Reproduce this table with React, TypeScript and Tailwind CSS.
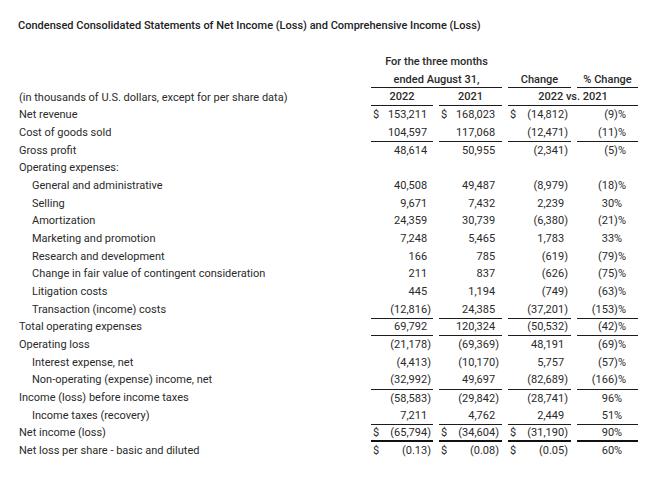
import React from "react";

type Cell = { d?: boolean; v: string };
type Row = {
  label: string;
  indent?: boolean;
  a: Cell;
  b: Cell;
  c: Cell;
  p: string;
  top?: boolean;
  bottom?: boolean;
  thick?: boolean;
};

const rows: Row[] = [
  { label: "Net revenue", a: { d: true, v: "153,211" }, b: { d: true, v: "168,023" }, c: { d: true, v: "(14,812)" }, p: "(9)%" },
  { label: "Cost of goods sold", a: { v: "104,597" }, b: { v: "117,068" }, c: { v: "(12,471)" }, p: "(11)%" },
  { label: "Gross profit", a: { v: "48,614" }, b: { v: "50,955" }, c: { v: "(2,341)" }, p: "(5)%", top: true },
  { label: "Operating expenses:", a: { v: "" }, b: { v: "" }, c: { v: "" }, p: "" },
  { label: "General and administrative", indent: true, a: { v: "40,508" }, b: { v: "49,487" }, c: { v: "(8,979)" }, p: "(18)%" },
  { label: "Selling", indent: true, a: { v: "9,671" }, b: { v: "7,432" }, c: { v: "2,239" }, p: "30%" },
  { label: "Amortization", indent: true, a: { v: "24,359" }, b: { v: "30,739" }, c: { v: "(6,380)" }, p: "(21)%" },
  { label: "Marketing and promotion", indent: true, a: { v: "7,248" }, b: { v: "5,465" }, c: { v: "1,783" }, p: "33%" },
  { label: "Research and development", indent: true, a: { v: "166" }, b: { v: "785" }, c: { v: "(619)" }, p: "(79)%" },
  { label: "Change in fair value of contingent consideration", indent: true, a: { v: "211" }, b: { v: "837" }, c: { v: "(626)" }, p: "(75)%" },
  { label: "Litigation costs", indent: true, a: { v: "445" }, b: { v: "1,194" }, c: { v: "(749)" }, p: "(63)%" },
  { label: "Transaction (income) costs", indent: true, a: { v: "(12,816)" }, b: { v: "24,385" }, c: { v: "(37,201)" }, p: "(153)%" },
  { label: "Total operating expenses", a: { v: "69,792" }, b: { v: "120,324" }, c: { v: "(50,532)" }, p: "(42)%", top: true, bottom: true },
  { label: "Operating loss", a: { v: "(21,178)" }, b: { v: "(69,369)" }, c: { v: "48,191" }, p: "(69)%" },
  { label: "Interest expense, net", indent: true, a: { v: "(4,413)" }, b: { v: "(10,170)" }, c: { v: "5,757" }, p: "(57)%" },
  { label: "Non-operating (expense) income, net", indent: true, a: { v: "(32,992)" }, b: { v: "49,697" }, c: { v: "(82,689)" }, p: "(166)%" },
  { label: "Income (loss) before income taxes", a: { v: "(58,583)" }, b: { v: "(29,842)" }, c: { v: "(28,741)" }, p: "96%", top: true },
  { label: "Income taxes (recovery)", indent: true, a: { v: "7,211" }, b: { v: "4,762" }, c: { v: "2,449" }, p: "51%" },
  { label: "Net income (loss)", a: { d: true, v: "(65,794)" }, b: { d: true, v: "(34,604)" }, c: { d: true, v: "(31,190)" }, p: "90%", top: true, bottom: true, thick: true },
  { label: "Net loss per share - basic and diluted", a: { d: true, v: "(0.13)" }, b: { d: true, v: "(0.08)" }, c: { d: true, v: "(0.05)" }, p: "60%" },
];

const grid = "grid grid-cols-[1fr_62px_63px_63px_61px] gap-x-[6px] h-[17.68px]";

function border(r: Row) {
  let s = "";
  if (r.top) s += " border-t border-t-[#1c1c1c]";
  if (r.bottom) s += r.thick ? " border-b-2 border-b-[#111]" : " border-b border-b-[#1c1c1c]";
  return s;
}

function Num({ cell, r, pr }: { cell: Cell; r: Row; pr: string }) {
  const v = cell.v;
  const neg = v.endsWith(")");
  const main = neg ? v.slice(0, -1) : v;
  return (
    <div className={"flex items-center justify-between pl-[2px] " + pr + border(r)}>
      <span>{cell.d ? "$" : ""}</span>
      {v ? (
        <span>
          {main}
          <span className={neg ? "" : "invisible"}>)</span>
        </span>
      ) : (
        <span />
      )}
    </div>
  );
}

function Pct({ r }: { r: Row }) {
  const v = r.p;
  if (!v) return <div className={border(r)} />;
  const s = v.slice(0, -1);
  const neg = s.endsWith(")");
  return (
    <div className={"flex items-center justify-end pr-[12px]" + border(r)}>
      {neg ? (
        <span>{s}%</span>
      ) : (
        <span>
          {s}%<span className="invisible">)</span>
        </span>
      )}
    </div>
  );
}

export default function App() {
  return (
    <div className="w-[647px] h-[483px] bg-white text-[#2a2a2a] font-['Roboto',sans-serif] text-[11px] leading-[13px] overflow-hidden">
      <div className="pt-[19px] pl-[18px] font-medium text-[11px] text-[#222]">
        Condensed Consolidated Statements of Net Income (Loss) and Comprehensive Income (Loss)
      </div>
      <div className="mt-[21px] pl-[19px] pr-[9px]">
        <div className={grid + " font-medium"}>
          <div />
          <div className="col-span-2 flex items-center justify-center">For the three months</div>
          <div />
          <div />
        </div>
        <div className={grid + " font-medium"}>
          <div />
          <div className="col-span-2 flex items-center justify-center border-b border-b-[#1c1c1c]">ended August 31,</div>
          <div className="flex items-center justify-center border-b border-b-[#1c1c1c]">Change</div>
          <div className="flex items-center justify-center border-b border-b-[#1c1c1c]">% Change</div>
        </div>
        <div className={grid}>
          <div className="flex items-center">(in thousands of U.S. dollars, except for per share data)</div>
          <div className="flex items-center justify-center border-b border-b-[#1c1c1c] font-medium">2022</div>
          <div className="flex items-center justify-center border-b border-b-[#1c1c1c] font-medium">2021</div>
          <div className="col-span-2 flex items-center justify-center border-b border-b-[#1c1c1c] font-medium">2022 vs. 2021</div>
        </div>
        {rows.map((r, i) => (
          <div key={i} className={grid}>
            <div className={"flex items-center " + (r.indent ? "pl-[13px]" : "")}>{r.label}</div>
            <Num cell={r.a} r={r} pr="pr-[2px]" />
            <Num cell={r.b} r={r} pr="pr-[3px]" />
            <Num cell={r.c} r={r} pr="pr-[3px]" />
            <Pct r={r} />
          </div>
        ))}
      </div>
    </div>
  );
}
